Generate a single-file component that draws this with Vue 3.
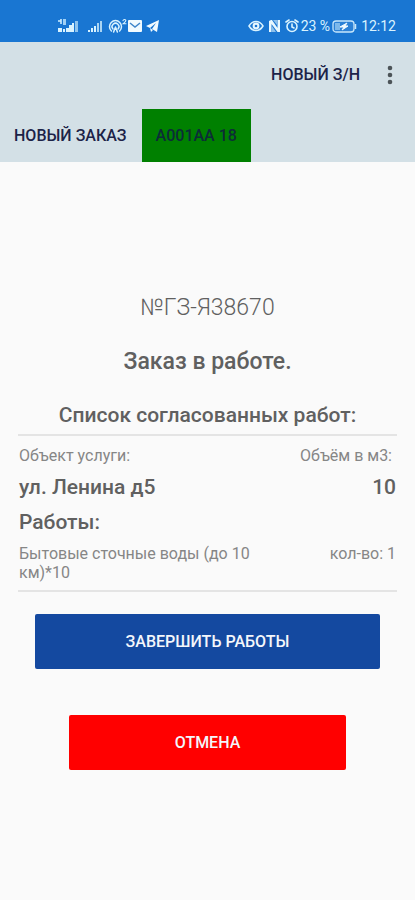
<script setup>
import { ref } from 'vue'

const tabs = ['НОВЫЙ ЗАКАЗ', 'А001АА 18']
const active = ref(1)
const order = {
  number: '№ГЗ-Я38670',
  status: 'Заказ в работе.',
  address: 'ул. Ленина д5',
  volume: 10,
  works: [{ name: 'Бытовые сточные воды (до 10 км)*10', count: 1 }],
}
</script>

<template>
  <div class="screen">
    <div class="status">
      <div class="status-left">
        <svg width="22" height="16" viewBox="0 0 22 16" aria-hidden="true">
          <path d="M1 3h3v3M4 1v5M6 2h3M6 4h3M6 6h3" stroke="#cdeeff" stroke-width="1.6" fill="none" />
          <path d="M1 10h4v4H1zM6 11h2v3H6z" fill="#d9f3ff" />
          <path d="M9 10h3v4H9zM12 7h3v7h-3zM15 5h2v9h-2z" fill="#d9f3ff" />
          <path d="M18 3h3v11h-3z" fill="#8fc4ee" />
        </svg>
        <svg class="signal" width="14" height="16" viewBox="0 0 14 16" aria-hidden="true">
          <path d="M0 12h2v2H0zM3 10h2v4H3zM6 8h2v6H6z" fill="#d9f3ff" />
          <path d="M9 5h2v9H9zM12 3h2v11h-2z" fill="#a9d4f3" />
        </svg>
        <svg class="hotspot" width="20" height="16" viewBox="0 0 20 16" aria-hidden="true">
          <g fill="none" stroke="#d9f3ff" stroke-width="1.500" stroke-linecap="round">
            <path d="M3.400 13A6 6 0 1 1 11.600 13" />
            <path d="M5 11a3.400 3.400 0 1 1 5 0" />
            <path d="M7.500 9 5.600 14M7.500 9l1.900 5" />
            <path d="M15 2.600c.4-1.600 3-1.400 2.800.2-.1 1-1.600 1.700-2.800 3h3" stroke-width="1.100" />
          </g>
        </svg>
        <svg width="14" height="16" viewBox="0 0 14 16" aria-hidden="true">
          <rect x="0" y="2" width="14" height="12" rx="1" fill="#f2fbff" />
          <path d="m2 5 5 4 5-4" fill="none" stroke="#3f86ca" stroke-width="1.500" />
        </svg>
        <svg class="plane" width="14" height="16" viewBox="0 0 14 16" aria-hidden="true">
          <path d="M13 2 0 8l4 2 6-5-4 6 5 3z" fill="#f2fbff" />
          <path d="m4 10 1 4 2-2z" fill="#f2fbff" />
        </svg>
      </div>
      <div class="status-right">
        <svg width="16" height="16" viewBox="0 0 16 16" aria-hidden="true">
          <path d="M1 8c3.600-6 10.400-6 14 0-3.600 6-10.400 6-14 0z" fill="none" stroke="#d9f3ff" stroke-width="1.500" />
          <circle cx="8" cy="8" r="3.400" fill="#e8f8ff" />
          <circle cx="8" cy="8" r="1.300" fill="#1976d2" />
        </svg>
        <svg class="nfc" width="13" height="16" viewBox="0 0 13 16" aria-hidden="true">
          <path d="M3 2 1 3v11h2.500V6l6 8H12V2H9.500v8L4 2z" fill="#e8f8ff" />
          <path d="M5 2h4v5zM4 8l4 6H4z" fill="#8cc0ec" />
        </svg>
        <svg class="alarm" width="14" height="16" viewBox="0 0 14 16" aria-hidden="true">
          <g fill="none" stroke="#d9f3ff" stroke-width="1.600" stroke-linecap="round">
            <circle cx="7" cy="8.500" r="5" />
            <path d="M1 4 4 2M13 4l-3-2M7 6v3l2 1" />
          </g>
        </svg>
        <span class="percent">23 %</span>
        <svg width="25" height="16" viewBox="0 0 25 16" aria-hidden="true">
          <rect x="1" y="3" width="21" height="11" rx="3" fill="#2c81d6" stroke="#c6e6fb" stroke-width="1.300" />
          <path d="M3 5h5v7H3z" fill="#7db8ea" />
          <path d="M23.500 6v5" stroke="#c6e6fb" stroke-width="1.500" />
          <path d="m15 5-7 4h4l-2 3 6-4h-3z" fill="#f2fbff" stroke="#f2fbff" />
        </svg>
        <time>12:12</time>
      </div>
    </div>

    <header>
      <div class="bar">
        <button class="action">НОВЫЙ З/Н</button>
        <button class="more" aria-label="Меню">
          <svg width="6" height="20" viewBox="0 0 6 20" aria-hidden="true">
            <g fill="#4c5458"><circle cx="3" cy="3" r="2.300" /><circle cx="3" cy="10" r="2.300" /><circle cx="3" cy="17" r="2.300" /></g>
          </svg>
        </button>
      </div>
      <nav>
        <button
          v-for="(tab, i) in tabs"
          :key="tab"
          class="tab"
          :class="{ active: active === i }"
          @click="active = i"
        >{{ tab }}</button>
      </nav>
    </header>

    <main>
      <h1>{{ order.number }}</h1>
      <h2>{{ order.status }}</h2>
      <h3>Список согласованных работ:</h3>
      <section>
        <div class="row label"><span>Объект услуги:</span><span class="volume">Объём в м3:</span></div>
        <div class="row strong"><span>{{ order.address }}</span><span>{{ order.volume }}</span></div>
        <div class="row strong works">Работы:</div>
        <div v-for="work in order.works" :key="work.name" class="row work">
          <span class="name">{{ work.name }}</span>
          <span>кол-во: {{ work.count }}</span>
        </div>
      </section>
      <button class="finish">ЗАВЕРШИТЬ РАБОТЫ</button>
      <button class="cancel">ОТМЕНА</button>
    </main>
  </div>
</template>

<style>
body {
  background: #fafafa;
}
</style>

<style scoped>
.screen {
  min-height: 100vh;
  background: #fafafa;
  color: #606060;
  font-family: Roboto, "Noto Sans", sans-serif;
}
button {
  border: 0;
  padding: 0;
  background: none;
  color: inherit;
  font: 500 16px/20px Roboto, "Noto Sans", sans-serif;
  cursor: pointer;
}
svg {
  display: block;
  flex: none;
}
.status {
  display: flex;
  justify-content: space-between;
  align-items: center;
  height: 42px;
  box-sizing: border-box;
  padding: 12px 19px 2px 57px;
  background: #1976d2;
  color: #d9f3ff;
  font-size: 14px;
  line-height: 20px;
}
.status-left,
.status-right {
  display: flex;
  align-items: center;
}
.signal {
  margin-left: 9px;
}
.hotspot {
  margin-left: 6px;
}
.plane {
  margin-left: 4px;
}
.nfc {
  margin-left: 4px;
}
.alarm {
  margin-left: 4px;
}
.percent {
  margin: 0 2px;
}
time {
  margin-left: 4px;
}
header {
  background: #d3e0e6;
  color: #1c2348;
}
.bar {
  display: flex;
  justify-content: flex-end;
  align-items: center;
  gap: 27px;
  height: 67px;
  box-sizing: border-box;
  padding: 0 22px 2px 0;
}
.more {
  display: flex;
}
nav {
  display: flex;
  gap: 1px;
}
.tab {
  height: 53px;
  padding: 0 14px;
}
.tab.active {
  background: #008000;
  color: #0d2c38;
}
main {
  display: flex;
  flex-direction: column;
  padding: 130px 18px 24px;
}
h1,
h2,
h3 {
  margin: 0;
  text-align: center;
}
h1 {
  font-size: 23px;
  line-height: 32px;
  font-weight: 300;
}
h2 {
  margin-top: 22px;
  font-size: 23px;
  line-height: 32px;
  font-weight: 500;
}
h3 {
  margin-top: 23px;
  font-size: 21px;
  line-height: 28px;
  font-weight: 500;
}
section {
  margin-top: 5px;
  padding: 10px 0 8px;
  border-top: 2px solid #e4e4e4;
  border-bottom: 2px solid #e4e4e4;
}
.row {
  display: flex;
  justify-content: space-between;
  padding: 0 1px;
}
.label,
.work {
  color: #868686;
  font-size: 16px;
  line-height: 19px;
}
.volume {
  padding-right: 4px;
}
.strong {
  margin-top: 8px;
  font-size: 21px;
  line-height: 28px;
  font-weight: 500;
}
.works {
  margin-top: 7px;
}
.work {
  margin-top: 8px;
}
.name {
  width: 65%;
}
.finish,
.cancel {
  height: 55px;
  border-radius: 2px;
  color: #f4f7fb;
}
.finish {
  margin: 22px 17px 0;
  background: #1449a0;
}
.cancel {
  margin: 46px 51px 0;
  background: #ff0000;
}
</style>
